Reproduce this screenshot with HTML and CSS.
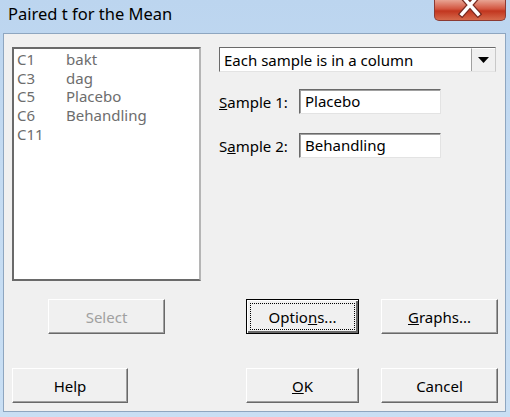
FILE: index.html
```html
<!DOCTYPE html>
<html lang="en">
<head>
    <meta charset="UTF-8">
    <title>Paired t for the Mean</title>
    <link rel="stylesheet" href="styles.css">
</head>
<body>
    <div class="window">
        <div class="titlebar">
            <span class="title">Paired t for the Mean</span>
            <div class="close">
                <svg width="24" height="18" viewBox="0 0 24 18">
                    <path d="M4 -4 L20 14 M20 -4 L4 14" stroke="#7a2a20" stroke-width="6" stroke-linecap="square" fill="none"/>
                    <path d="M4 -4 L20 14 M20 -4 L4 14" stroke="#ffffff" stroke-width="3.5" stroke-linecap="square" fill="none"/>
                </svg>
            </div>
        </div>
        <div class="client">
            <div class="top">
                <div class="listbox">
                    <div class="item"><span class="col">C1</span><span>bakt</span></div>
                    <div class="item"><span class="col">C3</span><span>dag</span></div>
                    <div class="item"><span class="col">C5</span><span>Placebo</span></div>
                    <div class="item"><span class="col">C6</span><span>Behandling</span></div>
                    <div class="item"><span class="col">C11</span><span></span></div>
                </div>
                <div class="fields">
                    <div class="combo">
                        <span class="combo-text">Each sample is in a column</span>
                        <span class="combo-arrow">
                            <svg width="11" height="6" viewBox="0 0 11 6"><path d="M0 0 H11 L5.5 6 Z" fill="#000"/></svg>
                        </span>
                    </div>
                    <div class="field-row">
                        <label><u>S</u>ample 1:</label>
                        <div class="textbox">Placebo</div>
                    </div>
                    <div class="field-row">
                        <label>S<u>a</u>mple 2:</label>
                        <div class="textbox">Behandling</div>
                    </div>
                </div>
            </div>
            <div class="buttons">
                <button class="btn select" disabled>Select</button>
                <button class="btn options focused"><span class="focus">Optio<u>n</u>s...</span></button>
                <button class="btn graphs"><u>G</u>raphs...</button>
                <button class="btn help">Help</button>
                <button class="btn ok"><u>O</u>K</button>
                <button class="btn cancel">Cancel</button>
            </div>
        </div>
    </div>
</body>
</html>
```

FILE: styles.css
```css
body {
    margin: 0;
    font-family: "Noto Sans", "Open Sans", sans-serif;
    background: #c3d8ee;
}

.window {
    width: 510px;
    height: 417px;
    display: flex;
    flex-direction: column;
    background: linear-gradient(to bottom, #bcd5ef 0%, #c4dbf2 40%, #c9dff4 100%);
    overflow: hidden;
}

.titlebar {
    height: 33px;
    display: flex;
    align-items: flex-start;
    justify-content: space-between;
    flex-shrink: 0;
}

.title {
    margin: 2px 0 0 8px;
    font-size: 16.5px;
    color: #000;
}

.close {
    width: 70px;
    height: 20px;
    margin-right: 4px;
    border: 1px solid #8b3a33;
    border-top: none;
    border-radius: 0 0 5px 5px;
    background: linear-gradient(to bottom, #e8a493 0%, #d2553f 45%, #c2361f 55%, #d66a4c 100%);
    display: flex;
    justify-content: center;
    align-items: flex-start;
}

.client {
    margin: 0 4px 5px 3px;
    flex: 1;
    background: #f0f0f0;
    border: 1px solid #8ea6c0;
    padding: 13px 8px 0 8px;
}

.top {
    display: flex;
}

.listbox {
    flex-shrink: 0;
    width: 182px;
    height: 229px;
    background: #fff;
    border: 2px solid;
    border-color: #6a6a6a #b5b5b5 #6a6a6a #6a6a6a;
    padding: 1px 0 0 3px;
    color: #6d6d6d;
    font-size: 15px;
    line-height: 18.7px;
}

.item {
    display: flex;
}

.col {
    width: 49px;
}

.fields {
    flex-shrink: 0;
    margin-left: 18px;
}

.combo {
    width: 275px;
    height: 23px;
    border: 1px solid;
    border-color: #6a6a6a #c8c8c8 #e3e3e3 #6a6a6a;
    background: #fff;
    display: flex;
    justify-content: space-between;
    align-items: center;
    font-size: 15px;
}

.combo-text {
    padding-left: 4px;
}

.combo-arrow {
    width: 24px;
    height: 23px;
    box-sizing: border-box;
    background: #f0f0f0;
    border-left: 1px solid #a0a0a0;
    border-top: 1px solid #fff;
    display: flex;
    justify-content: center;
    align-items: center;
}

.field-row {
    display: flex;
    align-items: center;
    margin-top: 17px;
}

.field-row + .field-row {
    margin-top: 19px;
}

label {
    width: 80px;
    font-size: 15px;
    color: #000;
}

.textbox {
    width: 135px;
    height: 23px;
    background: #fff;
    border: 1px solid;
    border-color: #6a6a6a #e3e3e3 #e3e3e3 #6a6a6a;
    box-shadow: inset 1px 1px 0 #a0a0a0;
    padding-left: 5px;
    font-size: 15px;
    line-height: 22px;
}

.buttons {
    display: grid;
    grid-template-columns: 36px 117px 81px 113px 22px 117px;
    grid-template-rows: 35px 35px;
    row-gap: 34px;
    margin-top: 18px;
}

.btn {
    font-family: inherit;
    font-size: 15px;
    color: #000;
    background: #f0f0f0;
    border: 1px solid;
    border-color: #fff #696969 #696969 #fff;
    box-shadow: inset -1px -1px 0 #a0a0a0;
    padding: 0;
    height: 35px;
}

.select {
    grid-column: 2;
    grid-row: 1;
    color: #a0a0a0;
}

.options {
    grid-column: 4;
    grid-row: 1;
}

.graphs {
    grid-column: 6;
    grid-row: 1;
}

.help {
    grid-column: 1 / span 2;
    grid-row: 2;
    width: 116px;
}

.ok {
    grid-column: 4;
    grid-row: 2;
}

.cancel {
    grid-column: 6;
    grid-row: 2;
}

.focused {
    border-color: #000;
    box-shadow: inset 1px 1px 0 #fff, inset -2px -2px 0 #696969;
    padding: 3px;
}

.focus {
    display: flex;
    height: 100%;
    align-items: center;
    justify-content: center;
    border: 1px dotted #000;
    box-sizing: border-box;
}
```
